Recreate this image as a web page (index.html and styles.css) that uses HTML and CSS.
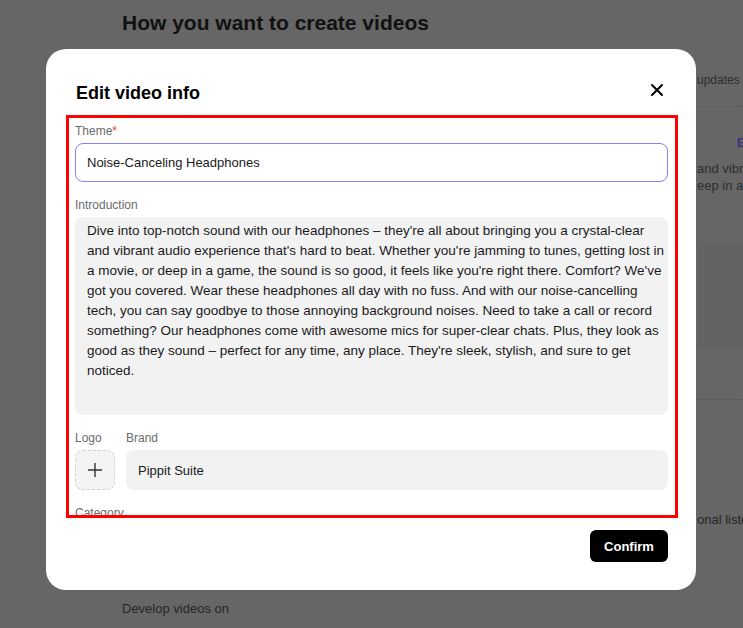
FILE: index.html
```html
<!DOCTYPE html>
<html lang="en">
<head>
  <meta charset="UTF-8">
  <meta name="viewport" content="width=device-width, initial-scale=1.0">
  <title>Edit video info</title>
  <link rel="stylesheet" href="styles.css">
</head>
<body>

  <div class="page">
    <h1 class="page-title">How you want to create videos</h1>
    <div class="peek">
      <div class="peek-line peek-top">updates to your videos</div>
      <div class="peek-rule"></div>
      <div class="peek-line peek-accent">Edit</div>
      <div class="peek-line peek-copy">and vibrant audio<br>eep in a game</div>
      <div class="peek-band"></div>
      <div class="peek-rule peek-rule-low"></div>
      <div class="peek-line peek-bottom">onal listening</div>
    </div>
    <p class="page-foot">Develop videos on</p>
  </div>

  <div class="overlay">
    <div class="modal">
      <div class="modal-header">
        <h2 class="modal-title">Edit video info</h2>
        <button class="close" aria-label="Close">
          <svg width="14" height="14" viewBox="0 0 14 14">
            <path d="M2 2 L12 12 M12 2 L2 12" stroke="#000" stroke-width="2" stroke-linecap="round"/>
          </svg>
        </button>
      </div>

      <div class="form-scroll">
        <label class="label">Theme<span class="req">*</span></label>
        <input class="field field-active" type="text" value="Noise-Canceling Headphones">

        <label class="label">Introduction</label>
        <textarea class="field field-area" readonly>Dive into top-notch sound with our headphones – they're all about bringing you a crystal-clear and vibrant audio experience that's hard to beat. Whether you're jamming to tunes, getting lost in a movie, or deep in a game, the sound is so good, it feels like you're right there. Comfort? We've got you covered. Wear these headphones all day with no fuss. And with our noise-cancelling tech, you can say goodbye to those annoying background noises. Need to take a call or record something? Our headphones come with awesome mics for super-clear chats. Plus, they look as good as they sound – perfect for any time, any place. They're sleek, stylish, and sure to get noticed.</textarea>

        <div class="brand-row">
          <div class="logo-col">
            <label class="label">Logo</label>
            <button class="logo-add" aria-label="Add logo">
              <svg width="16" height="16" viewBox="0 0 16 16">
                <path d="M8 1.5 V14.5 M1.5 8 H14.5" stroke="#333" stroke-width="1.4" stroke-linecap="round"/>
              </svg>
            </button>
          </div>
          <div class="brand-col">
            <label class="label">Brand</label>
            <input class="field field-fill" type="text" value="Pippit Suite">
          </div>
        </div>

        <label class="label">Category</label>
        <input class="field field-fill" type="text" value="Electronics">
      </div>

      <div class="modal-footer">
        <button class="confirm">Confirm</button>
      </div>
    </div>
  </div>

</body>
</html>
```

FILE: styles.css
```css
body {
  margin: 0;
  font-family: 'Liberation Sans', Arial, sans-serif;
  background: #666;
  height: 100vh;
  overflow: hidden;
}
.page {
  position: relative;
  height: 628px;
  padding: 0 0 0 122px;
  box-sizing: border-box;
}
.page-title {
  margin: 0;
  padding-top: 11px;
  font-size: 21px;
  line-height: 24px;
  font-weight: bold;
  color: #111;
}
.page-foot {
  position: absolute;
  left: 122px;
  top: 601px;
  margin: 0;
  font-size: 13px;
  color: #262626;
}
.peek {
  position: absolute;
  left: 697px;
  top: 72px;
  width: 46px;
  overflow: hidden;
  white-space: nowrap;
}
.peek-line {
  font-size: 12px;
  color: #2e2e2e;
}
.peek-top {
  line-height: 16px;
}
.peek-rule {
  border-top: 1px dotted #555;
  margin-top: 18px;
}
.peek-accent {
  margin: 29px 0 0 40px;
  line-height: 14px;
  font-weight: bold;
  color: #3b2f7e;
}
.peek-copy {
  margin-top: 10px;
  line-height: 17px;
  font-size: 13px;
}
.peek-band {
  height: 107px;
  margin-top: 48px;
  background: #636363;
}
.peek-rule-low {
  margin-top: 50px;
}
.peek-bottom {
  margin-top: 112px;
  line-height: 15px;
  font-size: 13px;
  color: #262626;
}

.overlay {
  position: fixed;
  inset: 0;
}
.modal {
  position: absolute;
  left: 46px;
  top: 49px;
  width: 650px;
  height: 541px;
  background: #fff;
  border-radius: 20px;
  padding: 0 18px 0 20px;
  box-sizing: border-box;
  display: flex;
  flex-direction: column;
}
.modal-header {
  display: flex;
  align-items: center;
  justify-content: space-between;
  padding: 32px 14px 0 10px;
  height: 24px;
  margin-bottom: 10px;
}
.modal-title {
  margin: 0;
  font-size: 18px;
  line-height: 24px;
  font-weight: bold;
  color: #000;
}
.close {
  border: none;
  background: none;
  padding: 0;
  width: 14px;
  height: 14px;
  margin-top: -6px;
  cursor: pointer;
}
.form-scroll {
  height: 403px;
  box-sizing: border-box;
  border: 3px solid #f00;
  padding: 6px 7px 0 6px;
  overflow: hidden;
  display: flex;
  flex-direction: column;
  flex-shrink: 0;
}
.label {
  display: block;
  font-size: 12px;
  line-height: 14px;
  color: #6b6b6b;
  margin-bottom: 5px;
}
.req {
  color: #f03a3a;
}
.field {
  display: block;
  width: 100%;
  box-sizing: border-box;
  font-family: 'Liberation Sans', Arial, sans-serif;
  font-size: 13px;
  color: #1a1a1a;
  border-radius: 8px;
  outline: none;
  margin: 0 0 16px;
  flex-shrink: 0;
}
.field-active {
  height: 39px;
  padding: 0 11px;
  border: 1px solid #8b7ff5;
  background: #fff;
}
.field-area {
  height: 198px;
  padding: 4px 2px 4px 12px;
  font-size: 13.5px;
  line-height: 20px;
  border: none;
  background: #f2f2f2;
  resize: none;
  overflow: hidden;
}
.field-fill {
  height: 40px;
  padding: 0 12px;
  border: none;
  background: #f2f2f2;
}
.brand-row {
  display: flex;
  gap: 11px;
}
.logo-col {
  width: 40px;
  flex-shrink: 0;
}
.brand-col {
  flex: 1;
}
.logo-add {
  width: 40px;
  height: 40px;
  box-sizing: border-box;
  border: 1px dashed #d2d2d2;
  border-radius: 8px;
  background: #f4f4f4;
  display: flex;
  align-items: center;
  justify-content: center;
  padding: 0;
  cursor: pointer;
}
.modal-footer {
  display: flex;
  justify-content: flex-end;
  padding: 12px 10px 0 0;
}
.confirm {
  height: 32px;
  width: 78px;
  border: none;
  border-radius: 6px;
  background: #000;
  color: #fff;
  font-family: 'Liberation Sans', Arial, sans-serif;
  font-size: 13px;
  font-weight: bold;
  cursor: pointer;
}
```
